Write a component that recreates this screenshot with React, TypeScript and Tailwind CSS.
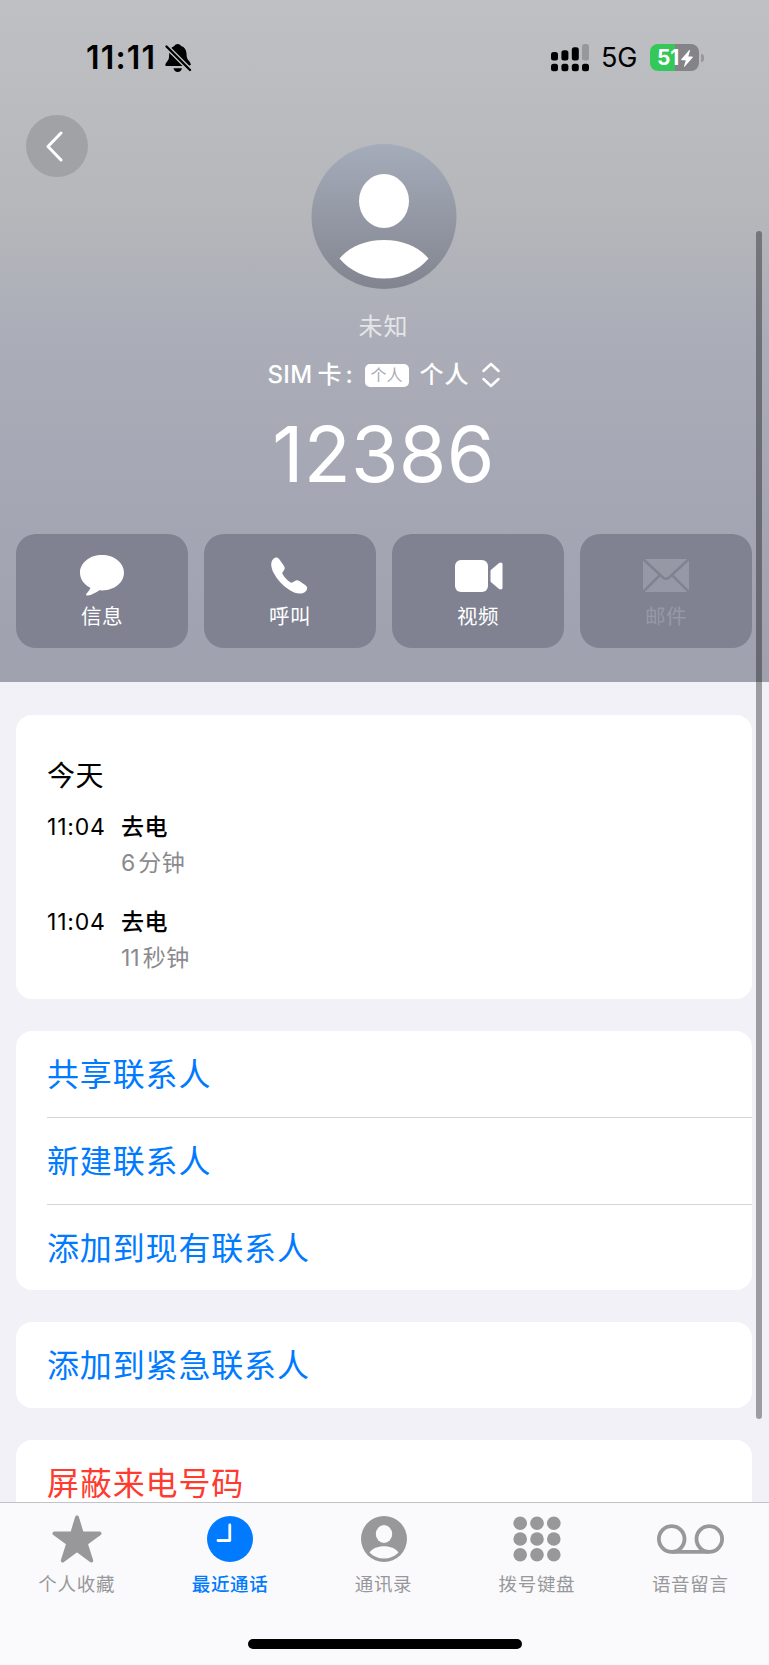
import React from 'react';

interface ActionButtonProps {
  label: string;
  disabled?: boolean;
  children: React.ReactNode;
}

function ActionButton({ label, disabled, children }: ActionButtonProps) {
  return (
    <button
      type="button"
      disabled={disabled}
      className={`flex h-[114px] w-[172px] flex-col items-center rounded-[20px] bg-[#808292] pt-[18px] ${
        disabled ? 'text-[#9798a6]' : 'text-white'
      }`}
    >
      <span className="flex h-[47px] items-center justify-center">{children}</span>
      <span className="text-[20.5px] leading-[36px] tracking-[0.6px]">{label}</span>
    </button>
  );
}

interface CallRowProps {
  time: string;
  type: string;
  amount: number;
  unit: string;
}

function CallRow({ time, type, amount, unit }: CallRowProps) {
  return (
    <div className="flex h-[95px] text-[23px] leading-9">
      <span className="w-[74px] tracking-[0.8px] text-black">{time}</span>
      <div className="flex flex-col">
        <span className="font-medium tracking-[0.5px] text-black">{type}</span>
        <span className="flex gap-[3px] text-[#8a8a8e]">
          <span>{amount}</span>
          <span className="tracking-[0.5px]">{unit}</span>
        </span>
      </div>
    </div>
  );
}

interface LinkListProps {
  items: string[];
  color?: string;
}

function LinkList({ items, color = 'text-[#007aff]' }: LinkListProps) {
  return (
    <div className="overflow-hidden rounded-[16px] bg-white pl-[31px]">
      {items.map((item, i) => (
        <div
          key={item}
          className={`flex h-[86.5px] items-center pt-[3px] text-[32px] tracking-[0.85px] ${color} ${
            i > 0 ? 'border-t border-[#d5d5d8]' : ''
          }`}
        >
          {item}
        </div>
      ))}
    </div>
  );
}

interface TabProps {
  label: string;
  active?: boolean;
  children: React.ReactNode;
}

function Tab({ label, active, children }: TabProps) {
  return (
    <div className={`flex flex-1 flex-col items-center ${active ? 'text-[#007aff]' : 'text-[#98989a]'}`}>
      <span className="flex h-[50px] items-center justify-center">{children}</span>
      <span className={`mt-1.5 text-[18.5px] leading-7 tracking-[0.7px] ${active ? 'font-medium' : ''}`}>{label}</span>
    </div>
  );
}

function StatusBar() {
  return (
    <div className="flex h-[115px] items-start pt-[37px] pr-[65px] pl-[86px] text-black">
      <span className="w-[79px] text-[32px] leading-[42px] font-semibold tracking-[1.2px]">11:11</span>
      <svg width="27" height="30" viewBox="0 0 27 30" className="mt-[7px]" fill="currentColor">
        <path d="M6 4.500C7 3 8.200 2.500 9.300 2C10 .8 11.200 0 12.700 0S15.400 .8 16.100 2C19.500 3 21.300 6 21.500 9.500C21.700 13.500 22 15 24.500 17.500L26 20.500L24 22Z" />
        <path d="M4.300 8.500L18.500 22H1.800C.5 22 0 21 .5 19.900C1.500 18 3.700 16.500 4 13.500Z" />
        <path d="M8.500 24.200H17C16.500 26.500 14.900 28 12.700 28S9 26.500 8.500 24.200Z" />
        <path d="M1.500 2.500L25 26" stroke="#bdbec2" strokeWidth="5" />
        <path d="M1.500 2.500L25 26" stroke="currentColor" strokeWidth="2.300" strokeLinecap="round" />
      </svg>
      <div className="ml-auto flex h-[28px] items-center pt-[13px]">
        <svg width="38" height="28" viewBox="0 0 38 28" fill="currentColor">
          <rect x="0" y="8" width="7" height="8.500" rx="2.500" />
          <rect x="10.400" y="6.300" width="7" height="10.200" rx="2.500" />
          <rect x="20.800" y="3.200" width="7" height="13.300" rx="2.500" />
          <rect x="31" y="0" width="7" height="16.500" rx="2.500" fill="#98989c" />
          <rect x="0" y="19.800" width="7" height="7.500" rx="2.500" />
          <rect x="10.400" y="19.800" width="7" height="7.500" rx="2.500" />
          <rect x="20.800" y="19.800" width="7" height="7.500" rx="2.500" />
          <rect x="31" y="19.800" width="7" height="7.500" rx="2.500" />
        </svg>
        <span className="ml-[12px] w-[49px] pt-px text-[27px] leading-[28px] tracking-[-0.2px]">5G</span>
        <div className="flex h-[27px] w-[49px] items-center rounded-[8px] bg-[linear-gradient(90deg,#34c759_51%,#848488_51%)] pl-[7px] text-white">
          <span className="w-[24px] text-[21px] leading-none font-bold tracking-[-0.2px]">51</span>
          <svg width="12" height="17" viewBox="0 0 12 17" className="mt-px" fill="currentColor">
            <path d="M8.300 0L.3 9.300C0 9.800 .2 10.200 .8 10.200H4.800L3 16.200C2.900 16.800 3.400 17 3.800 16.600L11.700 7.500C12 7 11.800 6.600 11.200 6.600H7.300L9 .6C9.200 -.1 8.700 -.3 8.300 0Z" />
          </svg>
        </div>
        <span className="ml-[2px] h-[8px] w-[3px] rounded-r-full bg-[#98989c]" />
      </div>
    </div>
  );
}

function Header() {
  return (
    <header className="h-[682px] bg-[linear-gradient(180deg,#bfc0c4_0px,#b6b7bb_210px,#abaeb8_330px,#a5a7b4_480px,#9fa1ae_682px)]">
      <StatusBar />
      <div className="flex items-start pl-[26px]">
        <button type="button" className="flex size-[62px] items-center justify-center rounded-full bg-[#a1a2a5]">
          <svg width="17" height="31" viewBox="0 0 17 31" fill="none" stroke="#fff" strokeWidth="3" strokeLinecap="round" strokeLinejoin="round" className="mr-1.5">
            <path d="M15 2L2 15.500L15 29" />
          </svg>
        </button>
        <svg width="146" height="146" viewBox="0 0 146 146" className="mt-[28px] ml-[223px]">
          <defs>
            <linearGradient id="avatar" x1="0" y1="0" x2="0" y2="1">
              <stop offset="0" stopColor="#a5acba" />
              <stop offset="1" stopColor="#82858f" />
            </linearGradient>
          </defs>
          <circle cx="73" cy="73.500" r="72.500" fill="url(#avatar)" />
          <ellipse cx="73" cy="58" rx="25" ry="27" fill="#fff" />
          <path d="M28.500 115.500C38 104 54 97 73 97S108 104 117.500 115.500C107 128 91 135.500 73 135.500S39 128 28.500 115.500Z" fill="#fff" />
        </svg>
      </div>
      <div className="flex flex-col items-center pr-[2px] text-white">
        <span className="mt-[19px] text-[24px] leading-[38px] tracking-[0.9px] text-[#e5e5e9]">未知</span>
        <div className="mt-[10px] flex h-[38px] items-center text-[24px] leading-[38px] font-medium">
          <span className="w-[50px] tracking-[0.3px]">SIM</span>
          <span className="w-[25px]">卡</span>
          <span className="w-[22px] pl-[3px]">:</span>
          <span className="flex h-[23px] w-[44px] items-center justify-center rounded-[5px] bg-white text-[16px] leading-none font-normal text-[#a8abb6]">
            个人
          </span>
          <span className="ml-[11px] w-[62px] tracking-[0.9px]">个人</span>
          <svg width="18" height="26" viewBox="0 0 18 26" fill="none" stroke="currentColor" strokeWidth="2.500" strokeLinecap="round" strokeLinejoin="round">
            <path d="M1.500 9L9 2L16.500 9M1.500 17L9 24L16.500 17" />
          </svg>
        </div>
        <span className="mt-[10px] text-[77px] leading-[100px] tracking-[0.3px]">12386</span>
      </div>
      <div className="mt-[30px] flex justify-between pr-[17px] pl-4">
        <ActionButton label="信息">
          <svg width="44" height="41" viewBox="0 0 44 41" fill="currentColor">
            <path d="M22 0C34.200 0 44 7.800 44 17.700S34.200 35.400 22 35.400C21 35.400 20.300 35.400 19.400 35.300C16 37.500 11.500 40.300 7.700 40.600C6.200 40.700 5.600 39.500 6.600 38.400C8 37 10 34.800 10.400 32.800C4 29.500 0 24 0 17.700C0 7.800 9.800 0 22 0Z" />
          </svg>
        </ActionButton>
        <ActionButton label="呼叫">
          <svg width="37" height="37" viewBox="0 0 37 37" fill="currentColor" className="mr-0.5">
            <path d="M2.300 1.900C4.300 .2 6.500 .1 8.300 2.200L12.700 8.600C14.200 10.800 13.900 12.300 12.700 13.800C11.300 15.500 11 16 11.800 17.500C13.500 20.500 16.500 23.500 19.200 25.200C20.600 26 21.500 25.800 23.500 24.300C25 23 26.500 22.800 28.300 24L34.500 28.300C36.800 30 36.600 32.100 35 34C31.300 38 25 37.200 18.500 33C11.500 28.500 6.500 23 3 16.500C-.3 10.500 -.8 4.900 2.300 1.900Z" />
          </svg>
        </ActionButton>
        <ActionButton label="视频">
          <svg width="48" height="32" viewBox="0 0 48 32" fill="currentColor" className="ml-0.5">
            <rect x="0" y="0" width="33" height="32" rx="6" />
            <path d="M35.500 11.500C35.500 10.500 36 9.800 36.700 9.200L43.800 3.300C45.600 2 47.500 2.600 47.500 4.500V27.500C47.500 29.400 45.600 30 43.800 28.700L36.700 22.800C36 22.200 35.500 21.500 35.500 20.500Z" />
          </svg>
        </ActionButton>
        <ActionButton label="邮件" disabled>
          <svg width="46" height="33" viewBox="0 0 46 33">
            <rect x="0" y="0" width="46" height="33" rx="2" fill="currentColor" />
            <path d="M0 0L20 18.500Q23 21 26 18.500L46 0M0 33L17 16M46 33L29 16" fill="none" stroke="#808292" strokeWidth="2.500" />
          </svg>
        </ActionButton>
      </div>
    </header>
  );
}

function TabBar() {
  return (
    <nav className="h-[163px] border-t border-[#c2c2c6] bg-[#fafafc]">
      <div className="flex pt-[11px] pr-[2px]">
        <Tab label="个人收藏">
          <svg width="50" height="48" viewBox="0 0 50 48" fill="currentColor" stroke="currentColor" strokeWidth="4" strokeLinejoin="round">
            <path d="M25 2.500L29.800 18.500H47.500L33.800 28.500L39.200 45.500L25 35L10.800 45.500L16.200 28.500L2.500 18.500H20.200Z" />
          </svg>
        </Tab>
        <Tab label="最近通话" active>
          <svg width="46" height="46" viewBox="0 0 46 46">
            <circle cx="23" cy="23" r="23" fill="currentColor" />
            <path d="M22.800 9V24.500H11" fill="none" stroke="#fff" strokeWidth="2.800" strokeLinecap="round" strokeLinejoin="round" />
          </svg>
        </Tab>
        <Tab label="通讯录">
          <svg width="46" height="46" viewBox="0 0 46 46">
            <circle cx="23" cy="23" r="23" fill="currentColor" />
            <ellipse cx="23" cy="18" rx="8.200" ry="9" fill="#fafafc" />
            <path d="M8.500 36.500C11.500 32.500 16.500 30.300 23 30.300S34.500 32.500 37.500 36.500C33.500 40.500 28.500 42.500 23 42.500S12.500 40.500 8.500 36.500Z" fill="#fafafc" />
          </svg>
        </Tab>
        <Tab label="拨号键盘">
          <svg width="48" height="46" viewBox="0 0 48 46" fill="currentColor">
            {[7.3, 23, 38.7].map((cy) =>
              [7.2, 24, 40.8].map((cx) => <circle key={`${cx}-${cy}`} cx={cx} cy={cy} r="6.800" />)
            )}
          </svg>
        </Tab>
        <Tab label="语音留言">
          <svg width="67" height="30" viewBox="0 0 67 30" fill="none" stroke="currentColor" strokeWidth="3.800">
            <circle cx="14.700" cy="15" r="12.800" />
            <circle cx="52.300" cy="15" r="12.800" />
            <path d="M14.700 27.800H52.300" />
          </svg>
        </Tab>
      </div>
      <div className="mx-auto mt-[41px] h-[10px] w-[274px] rounded-full bg-black" />
    </nav>
  );
}

export default function App() {
  return (
    <div className="relative flex h-[1665px] w-[769px] flex-col overflow-hidden bg-[#f2f1f7] font-[Inter,'Noto_Sans_CJK_SC',sans-serif]">
      <Header />
      <main className="flex h-[820px] flex-col gap-[31.5px] overflow-hidden pt-[33px] pr-[17px] pl-4">
        <section className="h-[284px] shrink-0 rounded-[16px] bg-white pt-[41px] pl-[31px]">
          <h2 className="mb-[12px] text-[28px] leading-[41px] tracking-[0.6px] text-black">今天</h2>
          <CallRow time="11:04" type="去电" amount={6} unit="分钟" />
          <CallRow time="11:04" type="去电" amount={11} unit="秒钟" />
        </section>
        <div className="flex shrink-0 flex-col gap-[31.5px]">
          <LinkList items={['共享联系人', '新建联系人', '添加到现有联系人']} />
          <LinkList items={['添加到紧急联系人']} />
          <LinkList items={['屏蔽来电号码']} color="text-[#ff3b30]" />
        </div>
      </main>
      <TabBar />
      {/* scroll indicator */}
      <div className="absolute top-[231px] right-[7px] h-[1188px] w-[6px] rounded-full bg-black/35" />
    </div>
  );
}
